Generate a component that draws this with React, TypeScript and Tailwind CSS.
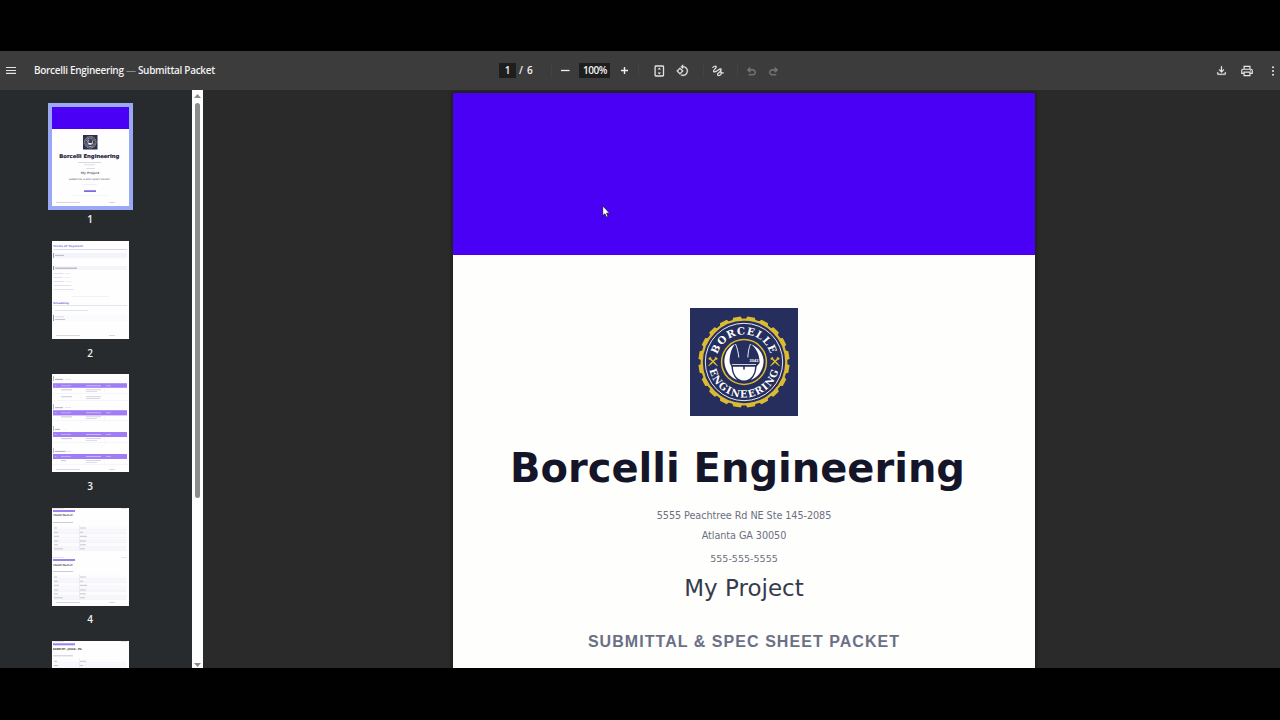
import React from "react";
import { MdOutlinePrint } from "react-icons/md";

const UNDO =
  "M280-200v-80h284q63 0 109.5-40T720-420q0-60-46.5-100T564-560H312l104 104-56 56-200-200 200-200 56 56-104 104h252q97 0 166.5 63T800-420q0 94-69.5 157T564-200H280Z";
const DOWNLOAD =
  "M480-320 280-520l56-58 104 104v-326h80v326l104-104 56 58-200 200ZM240-160q-33 0-56.5-23.5T160-240v-120h80v120h480v-120h80v120q0 33-23.5 56.5T720-160H240Z";
const ROTATE =
  "M7.34 6.41L.86 12.9l6.49 6.48 6.49-6.48-6.5-6.49zM3.69 12.9l3.66-3.66L11 12.9l-3.66 3.66-3.65-3.66zm15.67-6.26C17.61 4.88 15.3 4 13 4V.76L8.76 5 13 9.24V6c1.79 0 3.58.68 4.95 2.05 2.73 2.73 2.73 7.17 0 9.9C16.58 19.32 14.79 20 13 20c-.97 0-1.94-.21-2.84-.61l-1.49 1.49C10.02 21.62 11.51 22 13 22c2.3 0 4.61-.88 6.36-2.64 3.52-3.51 3.52-9.21 0-12.72z";

function Divider() {
  return <span className="h-[14px] w-px shrink-0 bg-[#434344]" />;
}

function Toolbar() {
  return (
    <header className="flex h-[39px] shrink-0 items-center bg-[#3c3c3d] font-['Open_Sans',sans-serif] text-[10px] font-semibold text-[#f1f1f1]">
      <div className="flex w-[499px] items-center">
        <svg className="-mt-[1px] ml-[6px] h-[8px] w-[10px]" viewBox="0 0 10 8">
          <path d="M0 1.5h10M0 4.5h10M0 7.3h10" stroke="#e4e4e4" strokeWidth="1.2" />
        </svg>
        <h1 className="ml-[18px] whitespace-nowrap tracking-[-0.31px]">
          Borcelli Engineering <span className="text-[#8a8a94]">—</span> Submittal Packet
        </h1>
      </div>
      <div className="flex w-[52px] items-center">
        <span className="flex h-[15px] w-[17px] items-center justify-center bg-[#1e1e1f]">1</span>
        <span className="ml-[3px] whitespace-pre">/</span>
        <span className="ml-[4px]">6</span>
      </div>
      <Divider />
      <div className="flex w-[86px] items-center">
        <svg className="ml-[9px] h-[9px] w-[9px]" viewBox="0 0 9 9">
          <path d="M0 4.5h8.5" stroke="#f1f1f1" strokeWidth="1.3" />
        </svg>
        <span className="ml-[9px] flex h-[15px] w-[31px] items-center justify-center bg-[#1e1e1f] pl-[1px] tracking-[-0.45px]">100%</span>
        <svg className="ml-[10px] h-[9px] w-[9px]" viewBox="0 0 9 9">
          <path d="M1 4.5h7M4.5 1v7" stroke="#f1f1f1" strokeWidth="1.4" />
        </svg>
      </div>
      <Divider />
      <div className="flex w-[64px] items-center">
        <svg className="ml-[15px] h-[12px] w-[11px]" viewBox="0 0 11 12" fill="none" stroke="#e4e4e4">
          <rect x="1.1" y="1" width="8.4" height="10" rx="0.8" strokeWidth="1.3" />
          <path d="M5.3 2.4 7.1 4.6H3.5zM5.3 9.6 3.5 7.4h3.6z" fill="#e4e4e4" stroke="none" />
        </svg>
        <svg className="ml-[11px] h-[13px] w-[13px]" viewBox="0 0 24 24" fill="#e4e4e4" stroke="#e4e4e4" strokeWidth="0.5">
          <path d={ROTATE} />
        </svg>
      </div>
      <Divider />
      <div className="flex w-[33px] items-center">
        <svg className="ml-[8px] h-[12px] w-[12px]" viewBox="0 0 12 12" fill="none" stroke="#e4e4e4" strokeWidth="1.25" strokeLinecap="round">
          <path d="M.8 2.4C2 1.2 3.6.8 4.2 1.7 4.8 3 1.3 4.7 1.6 6.3c.3 1.3 2.8.3 5-1.6 1.7-1.5 3.1-1 2.3.7C7.8 7.8 5.6 8 5.5 9.5c.1 1.5 2.3 1.4 3.3-.1 1-1.6.4-3-.9-3M9 7.7l2.3.1" />
        </svg>
      </div>
      <Divider />
      <div className="flex items-center">
        <svg className="ml-[6.5px] mt-[1px] h-[13px] w-[13px]" viewBox="0 -960 960 960" fill="#7d7d80" stroke="#7d7d80" strokeWidth="20">
          <path d={UNDO} />
        </svg>
        <svg className="ml-[9.5px] mt-[1px] h-[13px] w-[13px] -scale-x-100" viewBox="0 -960 960 960" fill="#7d7d80" stroke="#7d7d80" strokeWidth="20">
          <path d={UNDO} />
        </svg>
      </div>
      <div className="ml-auto flex items-center">
        <svg className="h-[13px] w-[13px]" viewBox="0 -960 960 960" fill="#e8e8e8" stroke="#e8e8e8" strokeWidth="15">
          <path d={DOWNLOAD} />
        </svg>
        <MdOutlinePrint className="ml-[12px] h-[14px] w-[14px] text-[#e8e8e8]" />
        <svg className="ml-[17px] mr-[5px] h-[10px] w-[4px]" viewBox="0 0 4 10" fill="#e8e8e8">
          <circle cx="2" cy="1.3" r="1" />
          <circle cx="2" cy="5" r="1" />
          <circle cx="2" cy="8.7" r="1" />
        </svg>
      </div>
    </header>
  );
}

const TEETH = Array.from({ length: 20 }, (_, i) => i * 18 + 9);

function Wrench({ x }: { x: number }) {
  return (
    <g transform={`translate(${x} 53.5)`} stroke="#dcbb32" fill="none">
      <path d="M-3-3 3 3M3-3-3 3" strokeWidth="1.7" />
      <path d="M-4.2-2.1-2.1-4.2M4.2-2.1 2.1-4.2M-4.2 3.4-3.4 4.2M4.2 3.4 3.4 4.2" strokeWidth="1.7" />
    </g>
  );
}

function Logo({ id, className, badge }: { id: string; className: string; badge?: string }) {
  return (
    <svg className={className} viewBox="0 0 108 108">
      <rect width="108" height="108" fill="#252e5d" />
      <g fill="#dcbb32">
        {TEETH.map((a) => (
          <path key={a} d="M48.8 12 50.2 8.5h7.6l1.4 3.5z" transform={`rotate(${a} 54 54)`} />
        ))}
      </g>
      <circle cx="54" cy="54" r="42.3" fill="none" stroke="#dcbb32" strokeWidth="2.3" />
      <circle cx="54" cy="54" r="38.7" fill="none" stroke="#fff" strokeWidth="0.9" />
      <circle cx="54" cy="54" r="22.4" fill="none" stroke="#dcbb32" strokeWidth="1.5" />
      <path id={`${id}-top`} d="M26.5 54a27.5 27.5 0 0 1 55 0" fill="none" />
      <path id={`${id}-bottom`} d="M18.5 54a35.5 35.5 0 0 0 71 0" fill="none" />
      <g fill="#fff" fontFamily="'DejaVu Serif', serif" fontWeight="700" textAnchor="middle">
        <text fontSize="10.2" letterSpacing="0.9">
          <textPath href={`#${id}-top`} startOffset="50%">BORCELLE</textPath>
        </text>
        <text fontSize="9.8" letterSpacing="1.1">
          <textPath href={`#${id}-bottom`} startOffset="50%">ENGINEERING</textPath>
        </text>
      </g>
      <Wrench x={23} />
      <Wrench x={85} />
      <path d="M45 36C37.5 39.5 33.8 47 34.5 55c.8 8 5.5 14 12.500 17-3.600-4-5.400-8-5.600-13.500l-1.700-3.500C39.300 48 41 41 45 36z" fill="#fff" />
      <path d="M61 36.200C69.500 39.500 74.200 47 73.500 55c-.8 8-5.500 14-12.500 17 3.600-4 5.400-8 5.600-13.500l3-3.500C69.600 47 67 41 61 36.200z" fill="#fff" />
      <path d="M45.500 36C47 39 48.500 45 48.800 49.500M60.500 36C59 39 58 45 57.800 49.500" fill="none" stroke="#fff" strokeWidth="0.900" />
      <path d="M42 56.500h24" stroke="#fff" strokeWidth="0.800" />
      <path d="M43 58.800h10.200v2.700h1.600v-2.700h10.200C65 66 61 72.500 54 72.500S43 66 43 58.800z" fill="#fff" />
      {badge && (
        <text x="64" y="54" fontSize="4" fontWeight="700" fontFamily="'Liberation Sans', sans-serif" fill="#fff" stroke="#252e5d" strokeWidth="1" paintOrder="stroke" textAnchor="middle">
          {badge}
        </text>
      )}
    </svg>
  );
}

type Bar = [x: number, y: number, w: number, h: number, color: string];

function Bars({ items }: { items: Bar[] }) {
  return (
    <>
      {items.map(([x, y, w, h, c], i) => (
        <rect key={i} x={x} y={y} width={w} height={h} fill={c} />
      ))}
    </>
  );
}

const FOOTER: Bar[] = [
  [4, 94.2, 24, 0.8, "#d0d0dc"],
  [57, 94.2, 6, 0.8, "#d0d0dc"],
];

const PAGE2: Bar[] = [
  [1.5, 8, 73.5, 0.8, "#d0cdf0"],
  [1.5, 12, 73.5, 5, "#f4f5fb"],
  [1, 12, 0.8, 5, "#8c88a8"],
  [3, 13.9, 9, 1, "#b9bac6"],
  [1.5, 25, 73.5, 4, "#f4f5fb"],
  [1, 25, 0.8, 4, "#77758c"],
  [3, 26.6, 22, 1.2, "#aeb0bb"],
  [1.5, 32, 10, 0.8, "#d9dae8"],
  [13, 32, 5, 0.8, "#e8e8f0"],
  [1.5, 36, 9, 0.8, "#d9dae8"],
  [12, 36, 7, 0.8, "#ececf3"],
  [1.5, 40, 11, 0.8, "#d9dae8"],
  [14, 40, 6, 0.8, "#ececf3"],
  [1.5, 44, 18, 0.8, "#dcdde8"],
  [1.5, 48, 20, 0.8, "#dcdde8"],
  [20, 55, 37, 0.7, "#ebebf2"],
  [1.5, 64, 73.5, 0.7, "#d8d8e4"],
  [3, 69, 33, 0.7, "#d6d5ea"],
  [1.5, 74, 73.5, 6, "#fafbfd"],
  [1, 74, 0.9, 6, "#8c83c9"],
  [3, 75.5, 9, 0.8, "#d8d8e4"],
  [3, 78, 10, 0.8, "#b9bac6"],
  ...FOOTER,
];

const PAGE3: Bar[] = [
  ...[
    [2, 9.2, 4.6],
    [30.2, 36.2, 5.2],
    [52, 58, 5],
    [74, 80, 5],
  ].flatMap(([mark, head, h], i): Bar[] => [
    [1, mark, 0.8, 5, "#a9a7b5"],
    [3, mark + 2.9, i === 3 ? 11 : i === 2 ? 5 : 8, 1.1, "#b5b6c9"],
    [13, mark + 3, i === 2 ? 1 : 6, 0.8, "#e2e2ec"],
    [1, head, 74, h, "#a17df5"],
    [2.5, head + 2.1, 2, 0.9, "#c6b2f8"],
    [9, head + 2.1, 10, 0.9, "#c6b2f8"],
    [34, head + 2.1, 15, 0.9, "#d0c0fa"],
    [54, head + 2.1, 5, 0.9, "#c6b2f8"],
    [9, head + 6.2, i === 3 ? 5 : 11, 0.9, "#c0c3d2"],
    [34, head + 6.2, 15, 0.8, "#c9cbdc"],
    [34, head + 8, 11, 0.8, "#d3d5e3"],
    [1, head + 10.4, 74, 0.4, "#ebeaf5"],
    [33, head + h, 0.3, 6, "#ebeaf5"],
    [52, head + h, 0.3, 6, "#ebeaf5"],
  ]),
  [9, 22.3, 11, 0.9, "#c0c3d2"],
  [34, 22.3, 15, 0.8, "#c9cbdc"],
  [34, 24.2, 14, 0.8, "#c9cbdc"],
  [1, 26.5, 74, 0.4, "#ebeaf5"],
  [4, 95, 24, 0.8, "#d0d0dc"],
  [57, 95, 6, 0.8, "#d0d0dc"],
];

function specBlock(top: number): Bar[] {
  const rows: Bar[] = [18, 22.3, 26.3, 31, 34.8, 38.8].flatMap((y, i): Bar[] => [
    [1.5, top + y, 73, 3.4, i % 2 ? "#f7f7fb" : "#fcfcfe"],
    [1.5, top + y + 3.4, 73, 0.4, "#e9e9f1"],
    [2, top + y + 1.5, [3, 4, 5, 4, 4, 9][i], 1, "#c5c6d1"],
    [28, top + y + 1.5, [6, 3, 7, 6, 6, 5][i], 1, "#c5c6d1"],
  ]);
  return [
    [1, top, 11, 0.6, "#d2d3dc"],
    [69, top, 6, 0.6, "#d2d3dc"],
    [1, top + 2, 22, 2, "#9b82ee"],
    [1, top + 14, 20, 1, "#cacbd9"],
    ...rows,
    [27.3, top + 17, 0.5, 25, "#dddde8"],
  ];
}

const PAGE4: Bar[] = [...specBlock(0), ...specBlock(49), [4, 94.1, 24, 0.7, "#bfc0e0"], [57, 94.1, 6, 0.7, "#c9c9d6"]];
const PAGE5: Bar[] = specBlock(0.3);

function Sheet({ bars, children }: { bars: Bar[]; children?: React.ReactNode }) {
  return (
    <svg className="block h-[98px] w-[77px] shrink-0 bg-[#fefefe]" viewBox="0 0 77 98" fontFamily="'DejaVu Sans', sans-serif">
      <Bars items={bars} />
      {children}
    </svg>
  );
}

function CoverThumb() {
  return (
    <div className="flex h-[99px] w-[77px] flex-col items-center bg-[#fefefe] font-['DejaVu_Sans',sans-serif]">
      <div className="h-[21.5px] w-full bg-[#4900f5]" />
      <Logo id="thumb" className="mt-[6.5px] h-[14.5px] w-[14.5px]" />
      <svg className="h-[56.5px] w-[77px]" viewBox="0 42.5 77 56.5">
        <text x="37.3" y="50.6" fontSize="5.3" fontWeight="700" fill="#20203a" stroke="#20203a" strokeWidth="0.15" textAnchor="middle" textLength="60">Borcelli Engineering</text>
        <Bars
          items={[
            [26, 54.8, 23, 0.7, "#c5c6d2"],
            [32, 57, 11, 0.7, "#ceced9"],
            [34, 60.5, 9, 0.7, "#ceced9"],
            [31, 77, 14, 0.5, "#e2e2ea"],
            [32, 82.8, 12, 1.6, "#6f5bdc"],
            [20, 88, 36, 0.5, "#efeff4"],
            [4, 94.7, 24, 0.7, "#c4c4ce"],
            [57, 94.7, 6, 0.7, "#c4c4ce"],
          ]}
        />
        <text x="38" y="66.2" fontSize="3.1" fill="#6c6c80" textAnchor="middle">My Project</text>
        <text x="37.5" y="72" fontSize="2.1" fill="#858593" textAnchor="middle" textLength="41">SUBMITTAL &amp; SPEC SHEET PACKET</text>
      </svg>
    </div>
  );
}

function Label({ n, className }: { n: number; className: string }) {
  return <span className={`flex items-center justify-center pr-[1px] ${className}`}>{n}</span>;
}

function Sidebar() {
  return (
    <aside className="flex w-[192px] shrink-0 flex-col overflow-hidden bg-[#282b2d] pl-[52px] font-['Open_Sans',sans-serif] text-[10px] font-semibold text-[#f1f1f1]">
      <div className="mt-[17px] flex w-[77px] shrink-0 flex-col">
        <div className="outline-[4.5px] outline-solid outline-[#9ba8f6]">
          <CoverThumb />
        </div>
        <Label n={1} className="h-[35px] pb-[8px]" />
        <Sheet bars={PAGE2}>
          <text x="1" y="6.2" fontSize="2.9" fontWeight="700" fill="#8178e0" textLength="30">Terms of Payment</text>
          <text x="1" y="63.2" fontSize="2.7" fontWeight="700" fill="#8178e0" textLength="16">Scheduling</text>
        </Sheet>
        <Label n={2} className="h-[35px] pb-[6px]" />
        <Sheet bars={PAGE3} />
        <Label n={3} className="h-[36px] pb-[8px]" />
        <Sheet bars={PAGE4}>
          <text x="1" y="8.3" fontSize="2.8" fill="#6a6b7e" textLength="20">16x20: Next of:</text>
          <text x="1" y="57.6" fontSize="2.8" fill="#6a6b7e" textLength="20">16x20: Next of:</text>
        </Sheet>
        <Label n={4} className="h-[35px] pb-[8px]" />
        <Sheet bars={PAGE5}>
          <text x="1" y="9" fontSize="2.8" fill="#55566a" textLength="29">EXERT-RT - JOULE - ML</text>
        </Sheet>
      </div>
    </aside>
  );
}

function Scrollbar() {
  return (
    <div className="flex w-[11px] shrink-0 flex-col items-center bg-[#fcfdfd]">
      <svg className="mt-[4px] h-[4px] w-[7px]" viewBox="0 0 7 4">
        <path d="M3.5 0 7 4H0z" fill="#8b8b8b" />
      </svg>
      <div className="mt-[5px] h-[395px] w-[5px] rounded-full bg-[#8b8c8c]" />
      <svg className="mb-[1px] mt-auto h-[4px] w-[7px]" viewBox="0 0 7 4">
        <path d="M3.5 4 7 0H0z" fill="#8b8b8b" />
      </svg>
    </div>
  );
}

function Cover() {
  return (
    <article className="ml-[250px] mt-[3px] flex h-[660px] w-[582px] shrink-0 flex-col items-center bg-[#fefefd] font-['DejaVu_Sans',sans-serif] shadow-[0_0_4px_1px_rgba(0,0,0,0.4)]">
      <div className="h-[162px] w-full shrink-0 bg-[#4900f5]" />
      <Logo id="cover" badge="2043" className="mt-[53px] h-[108px] w-[108px] shrink-0" />
      <h2 className="mr-[13px] mt-[28px] whitespace-nowrap text-[40px] font-bold leading-[48px] text-[#15152a]">Borcelli Engineering</h2>
      <p className="mt-[14px] whitespace-nowrap text-[9.7px] leading-[20px] tracking-[-0.08px] text-[#6d6f80]">5555 Peachtree Rd NE Ste 145-2085</p>
      <p className="whitespace-nowrap text-[9.7px] leading-[20px] tracking-[-0.08px] text-[#6d6f80]">Atlanta GA 30050</p>
      <p className="mt-[3px] whitespace-nowrap text-[9.55px] leading-[20px] text-[#6d6f80]">555-555-5555</p>
      <p className="mt-[4px] whitespace-nowrap text-[23px] leading-[30px] text-[#363b4b]">My Project</p>
      <p className="mt-[29px] whitespace-nowrap font-['Liberation_Sans',sans-serif] text-[16px] font-bold leading-[20px] tracking-[1.05px] text-[#6b7086]">
        SUBMITTAL &amp; SPEC SHEET PACKET
      </p>
    </article>
  );
}

export default function App() {
  return (
    <div className="relative flex h-[720px] w-[1280px] flex-col overflow-hidden bg-[#010102] py-[51px]">
      <Toolbar />
      <div className="flex h-[578px] shrink-0 overflow-hidden">
        <Sidebar />
        <Scrollbar />
        <main className="flex flex-1 items-start overflow-hidden bg-[#2a2a2b]">
          <Cover />
        </main>
      </div>
      <svg className="absolute left-[602px] top-[205px] h-[13px] w-[9px]" viewBox="0 0 9 13">
        <path d="M.7.8v10l2.2-2 1.5 3.4 1.7-.8-1.5-3.2h3.1z" fill="#fff" stroke="#15103a" strokeWidth="0.8" />
      </svg>
    </div>
  );
}
